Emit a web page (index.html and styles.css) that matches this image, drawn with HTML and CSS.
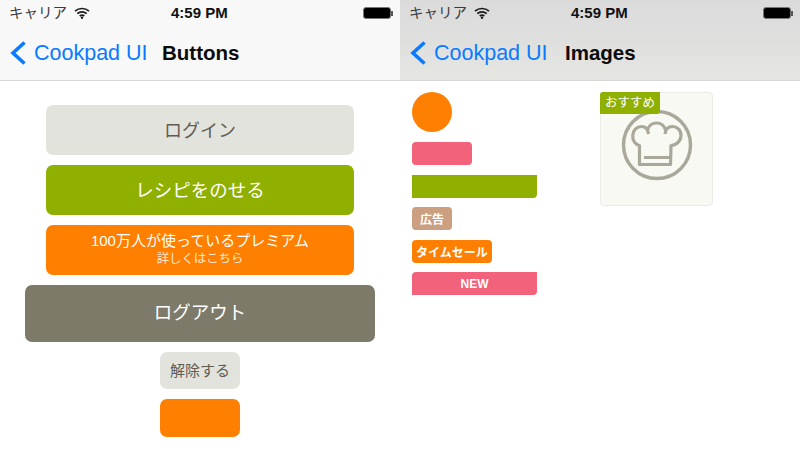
FILE: index.html
```html
<!DOCTYPE html>
<html lang="ja">
<head>
<meta charset="utf-8">
<title>Cookpad UI</title>
<link rel="stylesheet" href="styles.css">
</head>
<body>
<div class="screens">
  <section class="screen">
    <header class="bar bar-light">
      <div class="status">
        <div class="status-left">
          <span class="carrier">キャリア</span>
          <svg class="wifi" viewBox="0 0 16 12" width="16" height="12"><path d="M1 4.200C5 .6 11 .6 15 4.200M3.300 6.700c2.700-2.400 6.700-2.400 9.400 0M5.700 9c1.300-1.100 3.300-1.100 4.600 0" fill="none" stroke="#1c1c1c" stroke-width="1.700"/><circle cx="8" cy="10.800" r="1.200" fill="#1c1c1c"/></svg>
        </div>
        <span class="time">4:59 PM</span>
        <div class="battery"><span class="battery-body"></span><span class="battery-tip"></span></div>
      </div>
      <nav class="nav">
        <svg class="chevron" viewBox="0 0 16 24" width="16" height="24"><path d="M14.500 1.500 3 12l11.500 10.500" fill="none" stroke="#0a7aff" stroke-width="3.600"/></svg>
        <span class="back">Cookpad UI</span>
        <span class="title title-buttons">Buttons</span>
      </nav>
    </header>
    <main class="buttons">
      <div class="btn btn-wide btn-grey">ログイン</div>
      <div class="btn btn-wide btn-green">レシピをのせる</div>
      <div class="btn btn-wide btn-orange btn-double">
        <span class="line-main">100万人が使っているプレミアム</span>
        <span class="line-sub">詳しくはこちら</span>
      </div>
      <div class="btn btn-logout">ログアウト</div>
      <div class="btn btn-small btn-grey">解除する</div>
      <div class="btn btn-small btn-orange btn-blank"></div>
    </main>
  </section>
  <section class="screen">
    <header class="bar bar-grad">
      <div class="status">
        <div class="status-left">
          <span class="carrier">キャリア</span>
          <svg class="wifi" viewBox="0 0 16 12" width="16" height="12"><path d="M1 4.200C5 .6 11 .6 15 4.200M3.300 6.700c2.700-2.400 6.700-2.400 9.400 0M5.700 9c1.300-1.100 3.300-1.100 4.600 0" fill="none" stroke="#1c1c1c" stroke-width="1.700"/><circle cx="8" cy="10.800" r="1.200" fill="#1c1c1c"/></svg>
        </div>
        <span class="time">4:59 PM</span>
        <div class="battery"><span class="battery-body"></span><span class="battery-tip"></span></div>
      </div>
      <nav class="nav">
        <svg class="chevron" viewBox="0 0 16 24" width="16" height="24"><path d="M14.500 1.500 3 12l11.500 10.500" fill="none" stroke="#0a7aff" stroke-width="3.600"/></svg>
        <span class="back">Cookpad UI</span>
        <span class="title title-images">Images</span>
      </nav>
    </header>
    <main class="images">
      <div class="samples">
        <div class="circle"></div>
        <div class="chip chip-pink"></div>
        <div class="chip chip-green"></div>
        <div class="chip chip-tan">広告</div>
        <div class="chip chip-sale">タイムセール</div>
        <div class="chip chip-new">NEW</div>
      </div>
      <div class="card">
        <svg class="chef" viewBox="0 0 72 72" width="72" height="72">
          <circle cx="36" cy="36" r="33.500" fill="none" stroke="#aaa89a" stroke-width="3.400"/>
          <path d="M44 25C44.500 20 47.500 17.500 51.500 17.500 56 17.500 60 21 60 26.500 60 31.500 56 36 50 36.500L49.500 55.500H18.500L18.500 36.500C14.500 36 11.500 31.500 11.700 26.500 12 21 16 17.500 20.500 17.500 24.500 17.500 27 20 27.500 25M26.500 21C27.500 17 31 14 35.500 14 40 14 43.500 17 44.500 21M23 48.500H49.500" fill="none" stroke="#aaa89a" stroke-width="3.200" stroke-linejoin="round"/>
        </svg>
        <span class="ribbon">おすすめ</span>
      </div>
    </main>
  </section>
</div>
</body>
</html>
```
FILE: styles.css
```css
* { box-sizing: border-box; }
html, body { margin: 0; padding: 0; background: #fff; overflow: hidden; }
body { font-family: "Liberation Sans", "Noto Sans CJK JP", sans-serif; }
.screens { display: flex; width: 800px; height: 463px; }
.screen { width: 400px; height: 463px; display: flex; flex-direction: column; background: #fff; }

.bar { height: 81px; border-bottom: 1px solid #d6d6d6; flex: none; }
.bar-light { background: #f8f8f8; }
.bar-grad { background: linear-gradient(#dbdbdb, #e0e0df 60%, #e6e6e2); }

.status { height: 26px; display: flex; align-items: center; justify-content: space-between; padding: 0 7px 0 9px; position: relative; }
.status-left { display: flex; align-items: center; gap: 7px; }
.carrier { font-size: 14.500px; line-height: 26px; color: #3c3c3c; }
.wifi { display: block; }
.time { position: absolute; left: 171px; top: 0; font-size: 15px; line-height: 26px; font-weight: 700; color: #111; }
.battery { display: flex; align-items: center; }
.battery-body { width: 28.500px; height: 12px; background: #000; border: 1.500px solid #777; border-radius: 3px; }
.battery-tip { width: 2px; height: 5px; background: #555; }

.nav { height: 54px; display: flex; align-items: center; padding-left: 10px; }
.chevron { display: block; flex: none; }
.back { margin-left: 8px; font-size: 21.500px; color: #0a7aff; width: 128px; white-space: nowrap; }
.title { font-size: 20.500px; font-weight: 700; color: #0b0b0b; white-space: nowrap; }
.title-images { margin-left: 3px; }

.buttons { display: flex; flex-direction: column; align-items: center; gap: 10px; padding-top: 24px; }
.btn { display: flex; align-items: center; justify-content: center; border-radius: 7px; color: #fff; padding-bottom: 2px; }
.btn-wide { width: 308px; height: 50px; font-size: 18px; }
.btn-grey { background: #e3e3dd; color: #5f5d52; }
.btn-green { background: #8fb000; font-size: 18.500px; }
.btn-orange { background: #ff8000; }
.btn-double { flex-direction: column; padding-bottom: 0; }
.line-main { font-size: 15px; line-height: 18px; margin-top: -1px; }
.line-sub { font-size: 12.400px; line-height: 16px; color: #ffe6cc; margin-top: 1px; }
.btn-logout { width: 350px; height: 57px; background: #7d7a69; font-size: 18.500px; padding-bottom: 5px; }
.btn-small { width: 80px; height: 37px; font-size: 15px; padding-bottom: 3px; }
.btn-blank { height: 38px; }

.images { display: flex; padding: 11px 0 0 12px; }
.samples { width: 125px; display: flex; flex-direction: column; align-items: flex-start; gap: 10px; }
.circle { width: 40px; height: 40px; border-radius: 50%; background: #ff8000; }
.chip { height: 23px; border-radius: 4px; color: #fff; font-size: 12px; font-weight: 700; display: flex; align-items: center; justify-content: center; }
.chip-pink { width: 60px; background: #f2627a; }
.chip-green { width: 125px; background: #8fb000; border-radius: 0 0 4px 0; }
.chip-tan { width: 40px; background: #cb9f7f; margin-top: -1px; }
.chip-sale { width: 80px; background: #ff8000; }
.chip-new { width: 125px; background: #f2627a; border-radius: 4px 0 4px 0; margin-top: -1px; }

.card { width: 113px; height: 114px; margin-left: 63px; position: relative; background: #f9f9f4; border: 1px solid #ecece6; border-radius: 4px; }
.ribbon { position: absolute; left: -1px; top: -1px; width: 60px; height: 22px; background: #8fb000; color: #fff; font-size: 12.500px; line-height: 22px; text-align: center; border-radius: 3px 0 3px 0; }
.chef { position: absolute; left: 20px; top: 16px; display: block; }
```
